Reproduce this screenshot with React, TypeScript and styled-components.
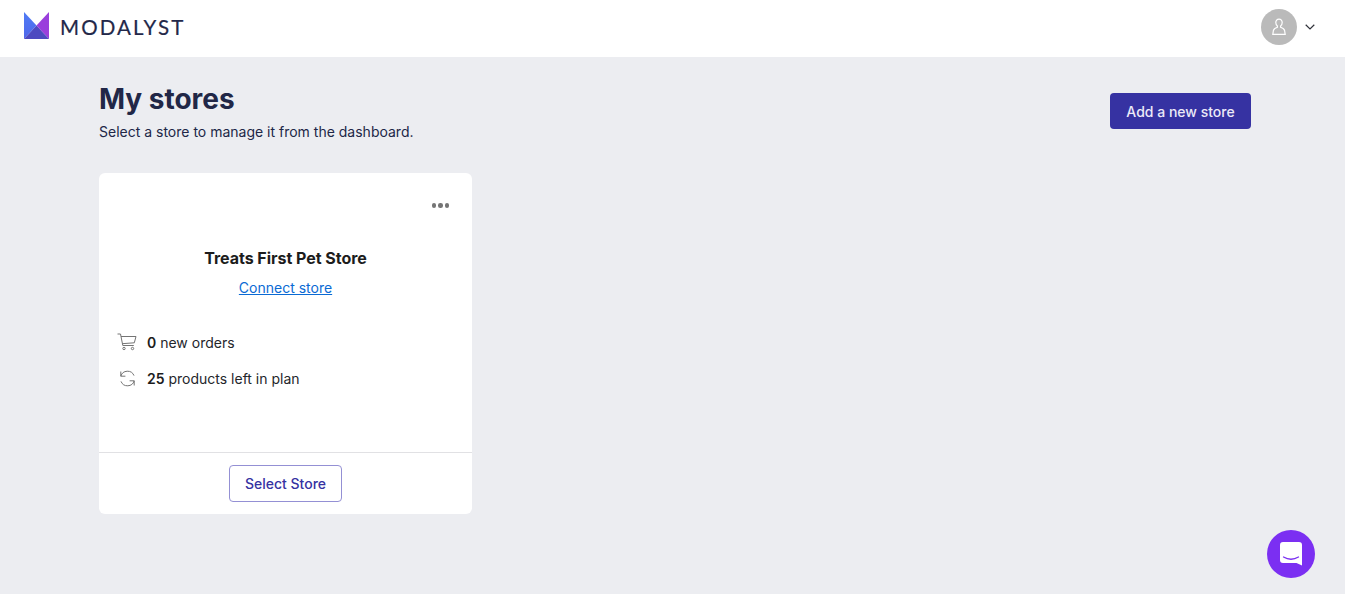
import React from "react";
import styled, { createGlobalStyle } from "styled-components";

const GlobalStyle = createGlobalStyle`
  html, body {
    margin: 0;
    padding: 0;
    background: #ecedf1;
    font-family: Inter, "Liberation Sans", sans-serif;
    color: #212747;
  }
  * {
    box-sizing: border-box;
  }
`;

const Page = styled.div`
  position: relative;
  min-height: 594px;
  overflow: hidden;
`;

const Header = styled.header`
  height: 57px;
  background: #fff;
  display: flex;
  align-items: center;
  justify-content: space-between;
  padding: 0 30px 6px 24px;
`;

const Brand = styled.div`
  display: flex;
  align-items: center;
  gap: 11px;
`;

const Wordmark = styled.span`
  font-family: Lato, "Noto Sans", sans-serif;
  font-size: 20.5px;
  font-weight: 400;
  letter-spacing: 2.1px;
  color: #232849;
  line-height: 26px;
  margin-top: 2px;
  -webkit-text-stroke: 0.2px #232849;
`;

const UserMenu = styled.div`
  display: flex;
  align-items: center;
  gap: 8px;
  padding-top: 3px;
`;

const Avatar = styled.div`
  width: 36px;
  height: 36px;
  border-radius: 50%;
  background: #bababa;
  display: flex;
  align-items: center;
  justify-content: center;
`;

const Main = styled.main`
  padding: 25px 94px 0 99px;
`;

const TitleRow = styled.div`
  display: flex;
  align-items: flex-start;
  justify-content: space-between;
  margin-bottom: 33px;
`;

const Title = styled.h1`
  margin: 0 0 7px;
  font-size: 28px;
  line-height: 34px;
  font-weight: 700;
  letter-spacing: -0.02px;
  color: #212747;
`;

const Subtitle = styled.p`
  margin: 0;
  font-size: 14px;
  line-height: 17px;
  color: #212747;
`;

const PrimaryButton = styled.button`
  width: 141px;
  height: 36px;
  margin-top: 11px;
  border: 0;
  border-radius: 4px;
  background: #3632a2;
  color: #eceaf8;
  font: 500 14px Inter, sans-serif;
  cursor: pointer;
`;

const Card = styled.section`
  width: 373px;
  height: 341px;
  background: #fff;
  border-radius: 6px;
  display: flex;
  flex-direction: column;
`;

const CardBody = styled.div`
  flex: 1;
  padding: 30px 18px 0;
  display: flex;
  flex-direction: column;
`;

const MoreRow = styled.div`
  display: flex;
  justify-content: flex-end;
  gap: 2px;
  height: 6px;
  padding-right: 5px;
`;

const Dot = styled.span`
  width: 4.5px;
  height: 4.5px;
  border-radius: 50%;
  background: #757575;
`;

const StoreName = styled.h2`
  margin: 39px 0 10px;
  text-align: center;
  font-size: 16px;
  line-height: 20px;
  font-weight: 700;
  letter-spacing: -0.03px;
  color: #1c1c1c;
`;

const ConnectLink = styled.a`
  display: block;
  text-align: center;
  font-size: 14px;
  line-height: 20px;
  color: #0a6ad4;
  text-decoration: underline;
  margin-bottom: 34px;
`;

const StatList = styled.div`
  display: flex;
  flex-direction: column;
  gap: 16px;
`;

const Stat = styled.div`
  display: flex;
  align-items: center;
  gap: 10px;
  height: 20px;
  font-size: 14px;
  color: #24262b;
`;

const StatIcon = styled.span`
  width: 20px;
  height: 20px;
  display: flex;
  align-items: center;
  justify-content: center;
`;

const StatValue = styled.strong`
  font-weight: 600;
  color: #1c1c1c;
`;

const CardFooter = styled.div`
  height: 62px;
  border-top: 1px solid #e1e1e4;
  display: flex;
  justify-content: center;
  padding-top: 12px;
`;

const OutlineButton = styled.button`
  width: 113px;
  height: 37px;
  border: 1px solid #9490d4;
  border-radius: 4px;
  background: #fff;
  color: #3632a2;
  font: 500 14px Inter, sans-serif;
  cursor: pointer;
`;

const ChatBubble = styled.div`
  position: absolute;
  right: 30px;
  bottom: 16px;
  width: 48px;
  height: 48px;
  border-radius: 50%;
  background: #7b2ff2;
  display: flex;
  align-items: center;
  justify-content: center;
`;

const LogoMark = () => (
  <svg width="25" height="27" viewBox="0 0 25 27">
    <defs>
      <linearGradient id="lm-left" x1="0" y1="0" x2="0" y2="1">
        <stop offset="0" stopColor="#4f7cf5" />
        <stop offset="1" stopColor="#4f66ea" />
      </linearGradient>
    </defs>
    <polygon points="0,0 12.5,13.5 0,27" fill="url(#lm-left)" />
    <polygon points="25,0 12.5,13.5 25,27" fill="#9a3fdc" />
    <polygon points="0,27 12.5,13.5 25,27" fill="#4d49c0" />
  </svg>
);

const UserIcon = () => (
  <svg width="14" height="18" viewBox="0 0 14 18" fill="none" stroke="#fff" strokeWidth="1.2">
    <path d="M7 1.2c-2 0-3.2 1.5-3.2 3.4 0 1.5.6 2.7 1.6 3.4v1.2c-1.9.6-3.6 1.500-4 3.300L.8 16.400h12.400l-.6-3.900c-.4-1.800-2.100-2.700-4-3.300V8c1-.7 1.600-1.900 1.600-3.400C10.200 2.700 9 1.200 7 1.200z" />
  </svg>
);

const Chevron = () => (
  <svg width="10" height="6" viewBox="0 0 10 6" fill="none" stroke="#30323a" strokeWidth="1.200">
    <path d="M.7.8 5 5l4.300-4.200" />
  </svg>
);

const CartIcon = () => (
  <svg width="20" height="18" viewBox="0 0 20 18" fill="none" stroke="#747474" strokeWidth="1">
    <path d="M.5 1h3l2.300 11.500h11" />
    <path d="M4 3.500h15l-1.700 6.300-12.200.9" />
    <circle cx="7" cy="15.500" r="1.200" />
    <circle cx="15.500" cy="15.500" r="1.200" />
  </svg>
);

const RefreshIcon = () => (
  <svg width="17" height="17" viewBox="0 0 17 17" fill="none" stroke="#747474" strokeWidth="1">
    <path d="M1.800 6.200A7 7 0 0 1 15 5.600" />
    <path d="M15.200 10.800A7 7 0 0 1 2 11.400" />
    <path d="M1.800 1.500v4.700h4.600" />
    <path d="M15.200 15.500v-4.700h-4.600" />
  </svg>
);

const ChatIcon = () => (
  <svg width="22" height="24" viewBox="0 0 22 24">
    <path d="M3 0h16a3 3 0 0 1 3 3v20.500l-5.500-2.500H3a3 3 0 0 1-3-3V3a3 3 0 0 1 3-3z" fill="#fff" />
    <path d="M3.500 15c4.500 2.700 10.500 2.700 15 0" fill="none" stroke="#7b2ff2" strokeWidth="1.300" strokeLinecap="round" />
  </svg>
);

const App: React.FC = () => {
  return (
    <Page>
      <GlobalStyle />
      <Header>
        <Brand>
          <LogoMark />
          <Wordmark>MODALYST</Wordmark>
        </Brand>
        <UserMenu>
          <Avatar>
            <UserIcon />
          </Avatar>
          <Chevron />
        </UserMenu>
      </Header>
      <Main>
        <TitleRow>
          <div>
            <Title>My stores</Title>
            <Subtitle>Select a store to manage it from the dashboard.</Subtitle>
          </div>
          <PrimaryButton>Add a new store</PrimaryButton>
        </TitleRow>
        <Card>
          <CardBody>
            <MoreRow>
              <Dot />
              <Dot />
              <Dot />
            </MoreRow>
            <StoreName>Treats First Pet Store</StoreName>
            <ConnectLink href="#">Connect store</ConnectLink>
            <StatList>
              <Stat>
                <StatIcon>
                  <CartIcon />
                </StatIcon>
                <span>
                  <StatValue>0</StatValue> new orders
                </span>
              </Stat>
              <Stat>
                <StatIcon>
                  <RefreshIcon />
                </StatIcon>
                <span>
                  <StatValue>25</StatValue> products left in plan
                </span>
              </Stat>
            </StatList>
          </CardBody>
          <CardFooter>
            <OutlineButton>Select Store</OutlineButton>
          </CardFooter>
        </Card>
      </Main>
      <ChatBubble>
        <ChatIcon />
      </ChatBubble>
    </Page>
  );
};

export default App;
